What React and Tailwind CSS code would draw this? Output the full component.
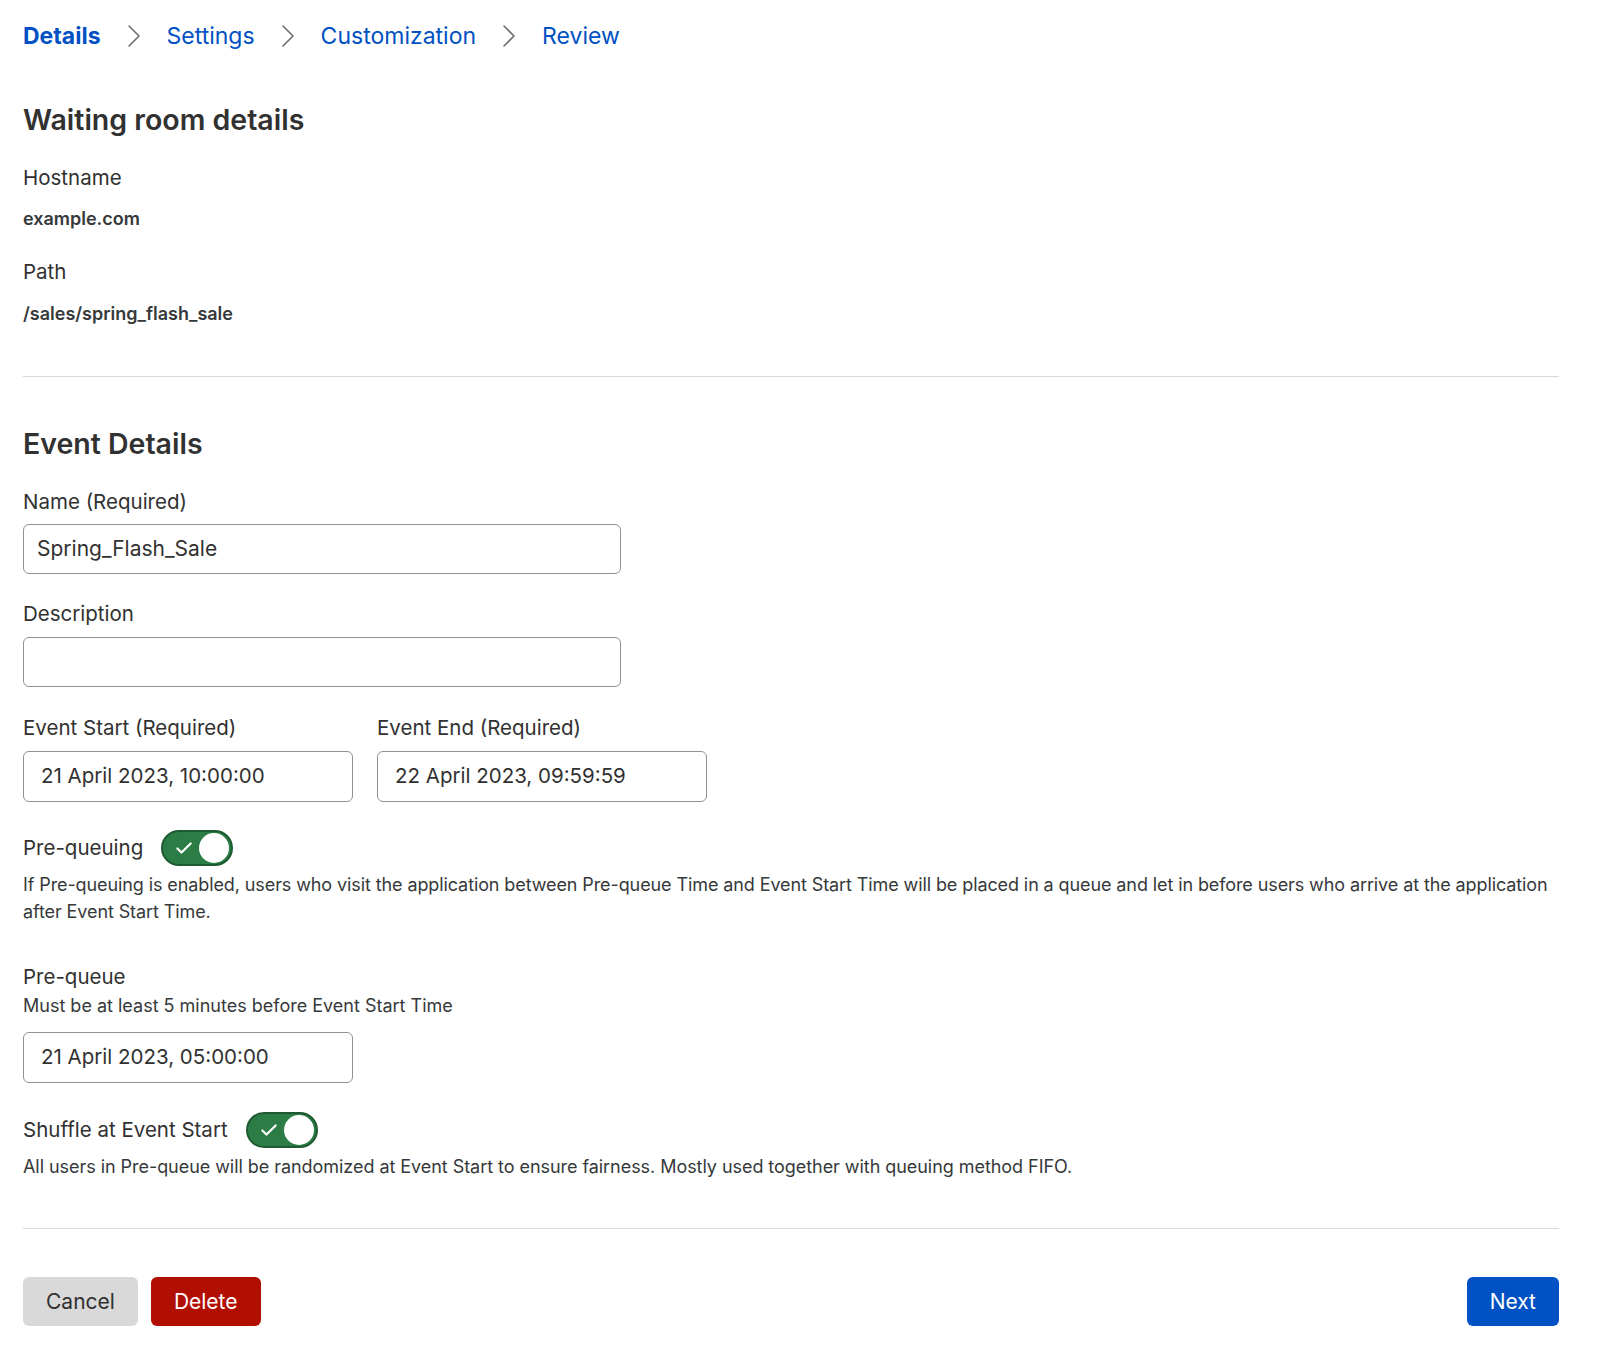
import React from 'react';

function Chevron() {
  return (
    <svg className="w-[14px] h-[24px] text-[#6b6f72]" viewBox="0 0 14 24" fill="none" stroke="currentColor">
      <path d="M2 2l10 10L2 22" strokeWidth={1.6} strokeLinecap="round" strokeLinejoin="round" />
    </svg>
  );
}

function Toggle() {
  return (
    <div className="w-[72px] h-[36px] rounded-full bg-[#2b7d45] border-2 border-[#1e5a31] flex items-center justify-between pl-[11px] pr-[2px]">
      <svg className="w-[20px] h-[20px] text-white" viewBox="0 0 24 24" fill="none" stroke="currentColor">
        <path d="M4 12.5l5 5L20 6.5" strokeWidth={2.6} strokeLinecap="round" strokeLinejoin="round" />
      </svg>
      <div className="w-[30px] h-[30px] rounded-full bg-white" />
    </div>
  );
}

function Field({ value, width }) {
  return (
    <div className={`${width} h-[51px] rounded-[6px] border border-[#8e9194] flex items-center pl-[17px] text-[20.5px] text-[#313131]`}>
      {value}
    </div>
  );
}

export default function App() {
  const steps = ['Details', 'Settings', 'Customization', 'Review'];

  return (
    <div className="min-h-[1362px] bg-white pl-[23px] pr-[41px] font-['Inter','Liberation_Sans',sans-serif] text-[#313131]">
      {/* Breadcrumb */}
      <nav className="pt-[20px] flex items-center gap-[26px] text-[23px] leading-[32px] text-[#0051c3]">
        {steps.map((s, i) => (
          <React.Fragment key={s}>
            {i > 0 && <Chevron />}
            <span className={i === 0 ? 'font-bold' : ''}>{s}</span>
          </React.Fragment>
        ))}
      </nav>

      {/* Waiting room details */}
      <h2 className="mt-[50px] text-[28.5px] leading-[36px] font-semibold text-[#313131]">Waiting room details</h2>
      <div className="mt-[26px] text-[20.5px] leading-[28px]">Hostname</div>
      <div className="mt-[15px] text-[18px] leading-[24px] font-semibold text-[#36393a]">example.com</div>
      <div className="mt-[27px] text-[20.5px] leading-[28px]">Path</div>
      <div className="mt-[16px] text-[18px] leading-[24px] font-semibold text-[#36393a]">/sales/spring_flash_sale</div>

      <hr className="mt-[50px] border-t border-[#d9d9d9]" />

      {/* Event details */}
      <h2 className="mt-[49px] text-[28.5px] leading-[36px] font-semibold">Event Details</h2>

      <div className="mt-[26px] text-[20.5px] leading-[28px]">Name (Required)</div>
      <div className="mt-[8px] w-[598px] h-[50px] rounded-[6px] border border-[#8e9194] flex items-center pl-[13px] text-[21px]">
        Spring_Flash_Sale
      </div>

      <div className="mt-[26px] text-[20.5px] leading-[28px]">Description</div>
      <div className="mt-[9px] w-[598px] h-[50px] rounded-[6px] border border-[#8e9194]" />

      <div className="mt-[27px] flex gap-[24px]">
        <div>
          <div className="text-[20.5px] leading-[28px]">Event Start (Required)</div>
          <div className="mt-[9px]">
            <Field value="21 April 2023, 10:00:00" width="w-[330px]" />
          </div>
        </div>
        <div>
          <div className="text-[20.5px] leading-[28px]">Event End (Required)</div>
          <div className="mt-[9px]">
            <Field value="22 April 2023, 09:59:59" width="w-[330px]" />
          </div>
        </div>
      </div>

      {/* Pre-queuing */}
      <div className="mt-[28px] flex items-center gap-[18px]">
        <span className="text-[20.5px] leading-[28px]">Pre-queuing</span>
        <Toggle />
      </div>
      <p className="mt-[5px] text-[18px] leading-[27px] tracking-[-0.1px] text-[#36393a]">
        If Pre-queuing is enabled, users who visit the application between Pre-queue Time and Event Start Time will be placed in a queue and let in before users who arrive at the application after Event Start Time.
      </p>

      <div className="mt-[38px] text-[20.5px] leading-[28px]">Pre-queue</div>
      <div className="mt-[2px] text-[18px] leading-[26px] text-[#36393a]">Must be at least 5 minutes before Event Start Time</div>
      <div className="mt-[13px]">
        <Field value="21 April 2023, 05:00:00" width="w-[330px]" />
      </div>

      <div className="mt-[29px] flex items-center gap-[18px]">
        <span className="text-[20.5px] leading-[28px]">Shuffle at Event Start</span>
        <Toggle />
      </div>
      <p className="mt-[5px] text-[18px] leading-[27px] tracking-[-0.05px] text-[#36393a]">
        All users in Pre-queue will be randomized at Event Start to ensure fairness. Mostly used together with queuing method FIFO.
      </p>

      <hr className="mt-[48px] border-t border-[#d9d9d9]" />

      {/* Actions */}
      <div className="mt-[48px] flex items-center">
        <button className="h-[49px] px-[23px] rounded-[6px] bg-[#d9d9d9] text-[21px] text-[#313131]">Cancel</button>
        <button className="ml-[13px] h-[49px] px-[23px] rounded-[6px] bg-[#b20f03] text-[21px] text-white">Delete</button>
        <button className="ml-auto h-[49px] px-[23px] rounded-[6px] bg-[#0051c3] text-[21px] text-white">Next</button>
      </div>
    </div>
  );
}
